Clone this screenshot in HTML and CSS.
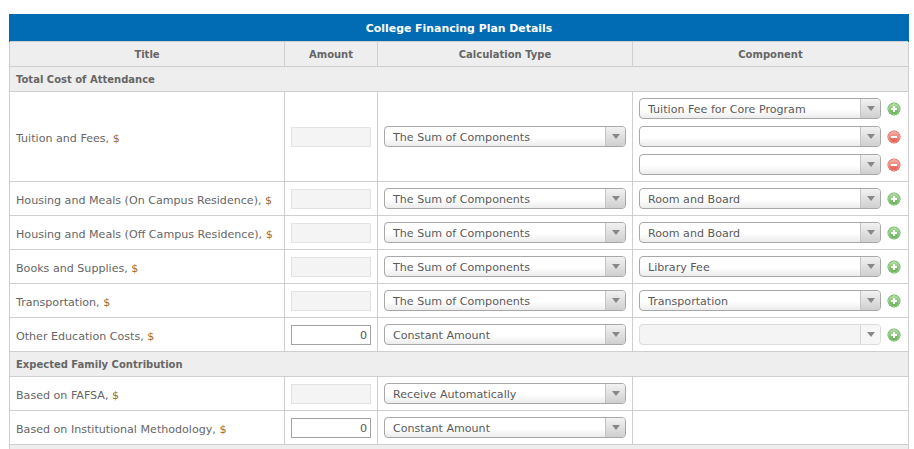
FILE: index.html
```html
<!DOCTYPE html>
<html lang="en">
<head>
<meta charset="utf-8">
<title>College Financing Plan Details</title>
<link rel="stylesheet" href="styles.css">
</head>
<body>
<svg class="defs" width="0" height="0" aria-hidden="true">
  <defs>
    <linearGradient id="g" x1="0" y1="0" x2="0" y2="1"><stop offset="0" stop-color="#b5dfa6"/><stop offset="1" stop-color="#5cae50"/></linearGradient>
    <linearGradient id="r" x1="0" y1="0" x2="0" y2="1"><stop offset="0" stop-color="#f7b0a6"/><stop offset="1" stop-color="#e0544a"/></linearGradient>
    <symbol id="plus" viewBox="0 0 14 14"><circle cx="7" cy="7" r="6.5" fill="#5aa851"/><circle cx="7" cy="7" r="5.5" fill="url(#g)" stroke="#c4e6b8" stroke-width=".6"/><path d="M7 4v6M4 7h6" stroke="#fff" stroke-width="2"/></symbol>
    <symbol id="minus" viewBox="0 0 14 14"><circle cx="7" cy="7" r="6.5" fill="#d9574c"/><circle cx="7" cy="7" r="5.5" fill="url(#r)" stroke="#f8c6be" stroke-width=".6"/><path d="M3.8 7h6.4" stroke="#fff" stroke-width="2"/></symbol>
  </defs>
</svg>
<table class="plan">
  <colgroup><col class="c1"><col class="c2"><col class="c3"><col class="c4"></colgroup>
  <thead>
    <tr class="caption"><th colspan="4">College Financing Plan Details</th></tr>
    <tr class="heads"><th>Title</th><th>Amount</th><th>Calculation Type</th><th>Component</th></tr>
  </thead>
  <tbody>
    <tr class="section"><td colspan="4">Total Cost of Attendance</td></tr>
    <tr class="tall">
      <td class="label">Tuition and Fees, <span class="cur">$</span></td>
      <td><div class="amount off"></div></td>
      <td><div class="select"><span class="val">The Sum of Components</span><span class="btn"><i></i></span></div></td>
      <td>
        <div class="comp"><div class="select"><span class="val">Tuition Fee for Core Program</span><span class="btn"><i></i></span></div><svg class="ico"><use href="#plus"/></svg></div>
        <div class="comp"><div class="select"><span class="val"></span><span class="btn"><i></i></span></div><svg class="ico"><use href="#minus"/></svg></div>
        <div class="comp"><div class="select"><span class="val"></span><span class="btn"><i></i></span></div><svg class="ico"><use href="#minus"/></svg></div>
      </td>
    </tr>
    <tr>
      <td class="label">Housing and Meals (On Campus Residence), <span class="cur">$</span></td>
      <td><div class="amount off"></div></td>
      <td><div class="select"><span class="val">The Sum of Components</span><span class="btn"><i></i></span></div></td>
      <td><div class="comp"><div class="select"><span class="val">Room and Board</span><span class="btn"><i></i></span></div><svg class="ico"><use href="#plus"/></svg></div></td>
    </tr>
    <tr>
      <td class="label">Housing and Meals (Off Campus Residence), <span class="cur">$</span></td>
      <td><div class="amount off"></div></td>
      <td><div class="select"><span class="val">The Sum of Components</span><span class="btn"><i></i></span></div></td>
      <td><div class="comp"><div class="select"><span class="val">Room and Board</span><span class="btn"><i></i></span></div><svg class="ico"><use href="#plus"/></svg></div></td>
    </tr>
    <tr>
      <td class="label">Books and Supplies, <span class="cur">$</span></td>
      <td><div class="amount off"></div></td>
      <td><div class="select"><span class="val">The Sum of Components</span><span class="btn"><i></i></span></div></td>
      <td><div class="comp"><div class="select"><span class="val">Library Fee</span><span class="btn"><i></i></span></div><svg class="ico"><use href="#plus"/></svg></div></td>
    </tr>
    <tr>
      <td class="label">Transportation, <span class="cur">$</span></td>
      <td><div class="amount off"></div></td>
      <td><div class="select"><span class="val">The Sum of Components</span><span class="btn"><i></i></span></div></td>
      <td><div class="comp"><div class="select"><span class="val">Transportation</span><span class="btn"><i></i></span></div><svg class="ico"><use href="#plus"/></svg></div></td>
    </tr>
    <tr>
      <td class="label">Other Education Costs, <span class="cur">$</span></td>
      <td><div class="amount">0</div></td>
      <td><div class="select"><span class="val">Constant Amount</span><span class="btn"><i></i></span></div></td>
      <td><div class="comp"><div class="select dis"><span class="val"></span><span class="btn"><i></i></span></div><svg class="ico"><use href="#plus"/></svg></div></td>
    </tr>
    <tr class="section"><td colspan="4">Expected Family Contribution</td></tr>
    <tr>
      <td class="label">Based on FAFSA, <span class="cur">$</span></td>
      <td><div class="amount off"></div></td>
      <td><div class="select"><span class="val">Receive Automatically</span><span class="btn"><i></i></span></div></td>
      <td></td>
    </tr>
    <tr>
      <td class="label">Based on Institutional Methodology, <span class="cur">$</span></td>
      <td><div class="amount">0</div></td>
      <td><div class="select"><span class="val">Constant Amount</span><span class="btn"><i></i></span></div></td>
      <td></td>
    </tr>
    <tr class="section foot"><td colspan="4"></td></tr>
  </tbody>
</table>
</body>
</html>
```
FILE: styles.css
```css
html, body { margin: 0; padding: 0; background: #fff; overflow: hidden; height: 449px; }
body { padding: 14px 5px 0 9px; font: 11.1px/14px "DejaVu Sans", sans-serif; color: #666; }
.defs { position: absolute; }

.plan { border-collapse: collapse; table-layout: fixed; width: 900px; }
.c1 { width: 275px; }
.c2 { width: 93px; }
.c3 { width: 255px; }
.c4 { width: 276px; }

.plan th, .plan td { border: 1px solid #cfcfcf; padding: 0 6px; vertical-align: middle; }

.plan .caption th { background: #016cb4; color: #fff; height: 27px; padding: 4px 0 0; box-sizing: border-box; border-width: 0 1px; border-color: #016cb4; font-size: 10.9px; font-weight: bold; text-align: center; }
.plan .heads th { background: #eeeeee; height: 25px; padding: 2px 0 0; box-sizing: border-box; font-size: 10px; font-weight: bold; text-align: center; color: #666; }
.section td { background: #eeeeee; font-size: 10px; font-weight: bold; color: #666; }
.plan td { height: 33px; }
.plan tr.section td { height: 25px; padding-top: 3px; box-sizing: border-box; }
.plan tr.tall td { height: 89px; }
.plan tr.foot td { height: 5px; border-bottom: 0; }
.plan td.label { padding-top: 6px; box-sizing: border-box; }

.cur { color: #9a6a2f; }

.amount { box-sizing: border-box; width: 80px; height: 20px; margin-top: 2px; border: 1px solid #a3a3a3; background: #fff; text-align: right; padding-right: 3px; line-height: 20px; color: #555; }
.amount.off { border-color: #e2e2e2; background: #f4f4f4; }

.select { box-sizing: border-box; flex: none; width: 242px; height: 21px; display: flex; border: 1px solid #a8a8a8; border-radius: 4px; background: linear-gradient(#fff 55%, #ececec); color: #5a5a5a; }
.val { flex: 1; min-width: 0; padding-left: 8px; line-height: 21px; white-space: nowrap; overflow: hidden; }
.btn { flex: none; width: 19px; border-left: 1px solid #c4c4c4; background: linear-gradient(#f2f2f2, #cfcfcf); border-radius: 0 3px 3px 0; display: flex; align-items: center; justify-content: center; }
.btn i { width: 0; height: 0; border: 4px solid transparent; border-top: 5px solid #888; border-bottom: 0; }
.select.dis { border-color: #dcdcdc; background: #f4f4f4; }
.select.dis .btn { background: #f6f6f6; border-left-color: #d4d4d4; }

.comp { display: flex; align-items: center; gap: 6px; width: 264px; }
.comp + .comp { margin-top: 7px; }
.ico { display: block; width: 14px; height: 14px; flex: none; margin-top: 2px; }
```
